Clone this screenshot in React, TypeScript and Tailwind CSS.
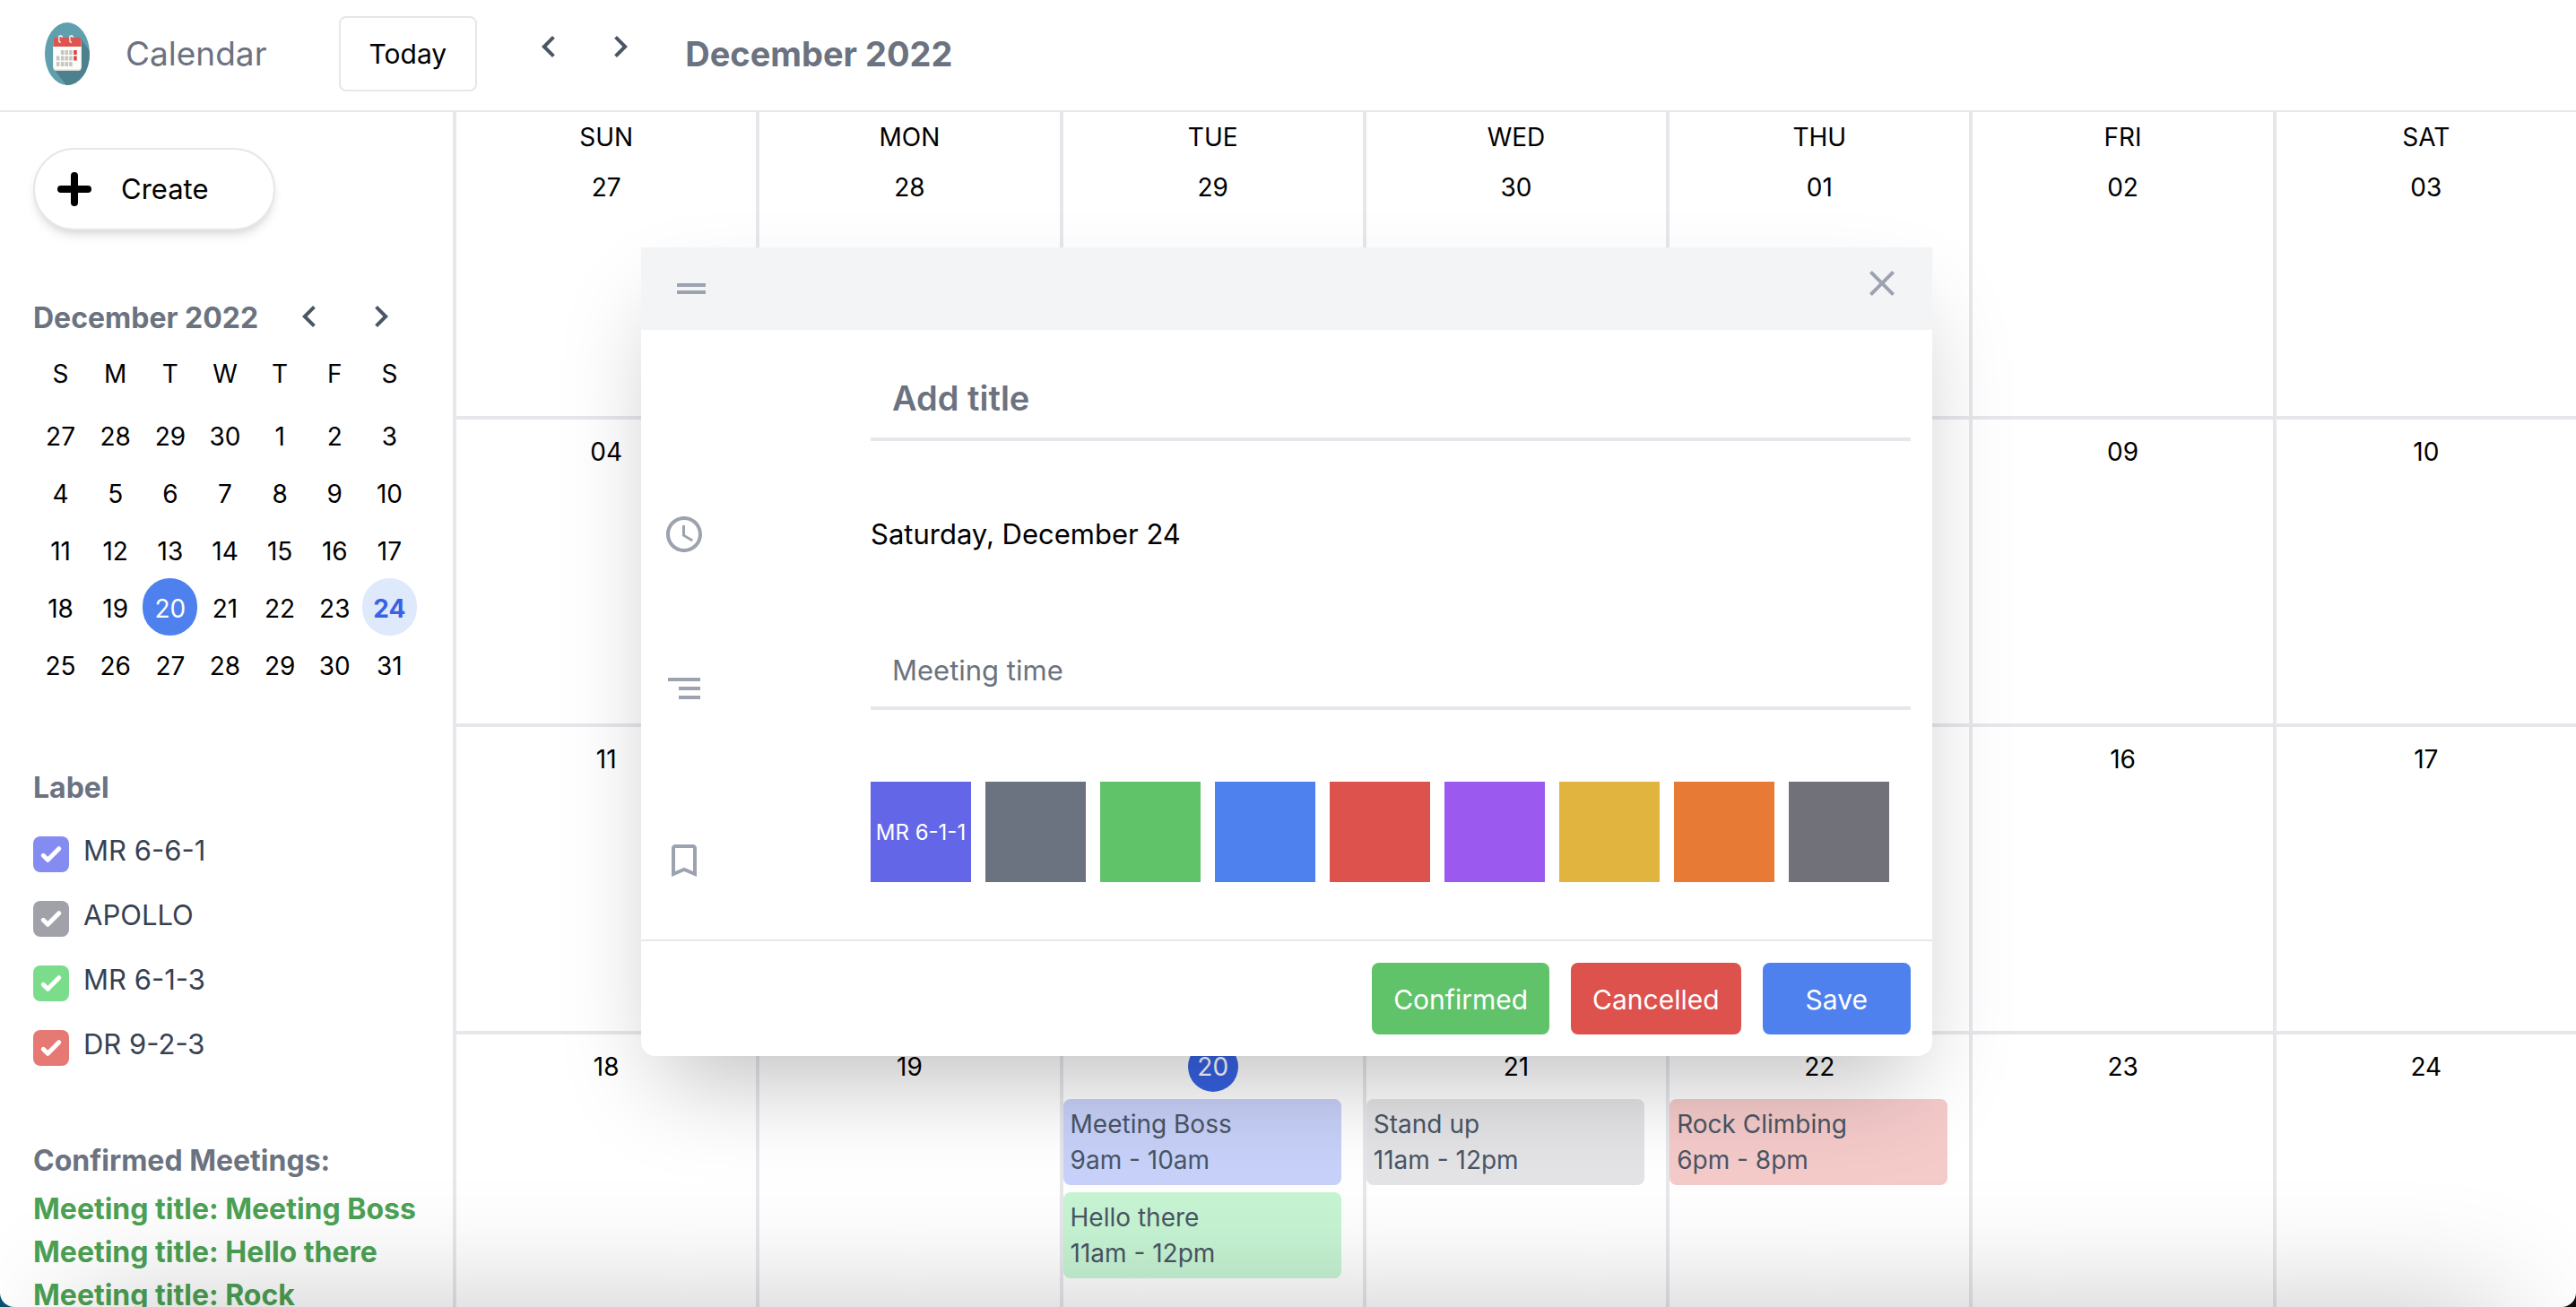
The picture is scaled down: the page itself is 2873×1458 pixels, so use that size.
import React from "react";
import {
  MdBookmarkBorder,
  MdChevronLeft,
  MdChevronRight,
  MdClose,
  MdDragHandle,
  MdSchedule,
  MdSegment,
} from "react-icons/md";

type CalendarEvent = { title: string; time: string; color: string };

const weekdays = ["SUN", "MON", "TUE", "WED", "THU", "FRI", "SAT"];

const monthDays = [
  "27", "28", "29", "30", "01", "02", "03",
  "04", "05", "06", "07", "08", "09", "10",
  "11", "12", "13", "14", "15", "16", "17",
  "18", "19", "20", "21", "22", "23", "24",
];

const events: Record<string, CalendarEvent[]> = {
  "20": [
    { title: "Meeting Boss", time: "9am - 10am", color: "bg-[#c8d1f9]" },
    { title: "Hello there", time: "11am - 12pm", color: "bg-[#c7f5d4]" },
  ],
  "21": [{ title: "Stand up", time: "11am - 12pm", color: "bg-[#e4e4e7]" }],
  "22": [{ title: "Rock Climbing", time: "6pm - 8pm", color: "bg-[#f5cbca]" }],
};

const miniDays = [
  27, 28, 29, 30, 1, 2, 3,
  4, 5, 6, 7, 8, 9, 10,
  11, 12, 13, 14, 15, 16, 17,
  18, 19, 20, 21, 22, 23, 24,
  25, 26, 27, 28, 29, 30, 31,
];

const labels = [
  { name: "MR 6-6-1", color: "bg-[#848cf1]" },
  { name: "APOLLO", color: "bg-[#a1a1aa]" },
  { name: "MR 6-1-3", color: "bg-[#7bdd8b]" },
  { name: "DR 9-2-3", color: "bg-[#e67974]" },
];

const swatches = [
  { name: "Indigo", text: "MR 6-1-1", color: "bg-[#6466e8]" },
  { name: "Gray", text: "", color: "bg-[#6b7280]" },
  { name: "Green", text: "", color: "bg-[#60c36a]" },
  { name: "Blue", text: "", color: "bg-[#4e81ee]" },
  { name: "Red", text: "", color: "bg-[#dd524c]" },
  { name: "Purple", text: "", color: "bg-[#9c59ef]" },
  { name: "Yellow", text: "", color: "bg-[#e1b43f]" },
  { name: "Orange", text: "", color: "bg-[#e77b36]" },
  { name: "Zinc", text: "", color: "bg-[#71717a]" },
];

function Logo() {
  return (
    <svg viewBox="0 0 70 70" preserveAspectRatio="none" className="h-[70px] w-[50px]" aria-hidden="true">
      <defs>
        <clipPath id="disc">
          <circle cx="35" cy="35" r="35" />
        </clipPath>
      </defs>
      <g clipPath="url(#disc)">
        <rect width="70" height="70" fill="#5f9fae" />
        <path d="M56 18 L76 38 V76 H40 L15 53 Z" fill="#4c818d" />
        <rect x="13" y="20" width="44" height="34" rx="4" fill="#d9d6d2" />
        <rect x="13" y="18" width="44" height="34.500" rx="4" fill="#fdfdfb" />
        <path d="M13 27 V21 a4 4 0 0 1 4 -4 H53 a4 4 0 0 1 4 4 V27 Z" fill="#dd5450" />
        <g fill="none" stroke="#e9e6e4" strokeWidth="2" strokeLinecap="round">
          <path d="M27 16 a3 2 0 0 0 -5 0 v4 a2 2 0 0 0 2 2" />
          <path d="M44 16 a3 2 0 0 0 -5 0 v4 a2 2 0 0 0 2 2" />
        </g>
        <g fill="#c9c6c1">
          <rect x="25" y="31" width="5" height="5" />
          <rect x="31.500" y="31" width="5" height="5" />
          <rect x="38" y="31" width="5" height="5" />
          <rect x="18" y="37.500" width="5" height="5" />
          <rect x="25" y="37.500" width="5" height="5" />
          <rect x="31.500" y="37.500" width="5" height="5" />
          <rect x="38" y="37.500" width="5" height="5" />
          <rect x="18" y="44" width="5" height="5" />
          <rect x="25" y="44" width="5" height="5" />
          <rect x="31.500" y="44" width="5" height="5" />
          <rect x="38" y="44" width="5" height="5" />
        </g>
        <g fill="#dd4444">
          <rect x="45" y="31" width="5" height="5" />
          <rect x="45" y="37.500" width="5" height="5" />
        </g>
      </g>
    </svg>
  );
}

function PlusIcon() {
  return (
    <svg viewBox="0 0 56 56" className="h-14 w-14" aria-hidden="true">
      <path d="M28 13 V43 M13 28 H43" stroke="#000" strokeWidth="8" strokeLinecap="round" fill="none" />
    </svg>
  );
}

function MonthArrows() {
  return (
    <div className="flex">
      <button type="button" aria-label="Previous month" className="px-4 text-gray-600">
        <MdChevronLeft size={48} />
      </button>
      <button type="button" aria-label="Next month" className="px-4 text-gray-600">
        <MdChevronRight size={48} />
      </button>
    </div>
  );
}

function Header() {
  return (
    <header className="flex h-[125px] shrink-0 items-center border-b-2 border-[#e5e7eb] bg-white pr-8 pb-1 pl-[50px]">
      <Logo />
      <h1 className="ml-10 text-[37px] leading-[56px] text-[#6b7280]">Calendar</h1>
      <button
        type="button"
        className="mr-10 ml-20 h-[84px] rounded-lg border-2 border-[#e5e7eb] px-8 text-[30px] leading-[48px] text-black"
      >
        Today
      </button>
      <div className="mb-4">
        <MonthArrows />
      </div>
      <h2 className="ml-8 text-[38px] leading-[56px] font-bold text-[#6b7280]">December 2022</h2>
    </header>
  );
}

function MiniCalendar() {
  return (
    <section className="mt-[72px]">
      <div className="flex h-12 items-center justify-between">
        <h2 className="h-12 pt-0.5 text-[32px] leading-[48px] font-bold text-[#6b7280]">December 2022</h2>
        <MonthArrows />
      </div>
      <div className="grid grid-cols-7">
        {["S", "M", "T", "W", "T", "F", "S"].map((d, i) => (
          <span key={i} className="pt-5 pb-4 text-center text-[28px] leading-10">
            {d}
          </span>
        ))}
        {miniDays.map((d, i) => {
          const tone =
            i === 23
              ? "bg-[#4e81ee] text-white"
              : i === 27
                ? "bg-[#dee9fc] font-bold text-[#3762e3]"
                : "text-black";
          return (
            <button
              key={i}
              type="button"
              className={`flex h-16 items-center justify-center rounded-full pt-1 text-[28px] leading-10 ${tone}`}
            >
              {d}
            </button>
          );
        })}
      </div>
    </section>
  );
}

function Labels() {
  return (
    <section className="mt-20">
      <h2 className="h-12 pt-0.5 text-[32px] leading-[48px] font-bold text-[#6b7280]">Label</h2>
      {labels.map((l) => (
        <label key={l.name} className="mt-6 flex h-12 items-end">
          <span className="relative h-10 w-10">
            <input
              type="checkbox"
              defaultChecked
              className={`block h-10 w-10 appearance-none rounded-lg ${l.color}`}
            />
            <svg viewBox="0 0 16 16" className="pointer-events-none absolute inset-0" fill="#fff" aria-hidden="true">
              <path d="M12.207 4.793a1 1 0 010 1.414l-5 5a1 1 0 01-1.414 0l-2-2a1 1 0 011.414-1.414L6.500 9.086l4.293-4.293a1 1 0 011.414 0z" />
            </svg>
          </span>
          <span className="ml-4 text-[31px] leading-[48px] text-[#374151]">{l.name}</span>
        </label>
      ))}
    </section>
  );
}

function Sidebar() {
  return (
    <aside className="w-[505px] shrink-0 pt-10 pr-10 pl-[37px]">
      <button
        type="button"
        className="flex items-center rounded-full border-2 border-[#e5e7eb] bg-white p-4 shadow-[0_8px_12px_-2px_rgba(0,0,0,0.1),0_4px_8px_-4px_rgba(0,0,0,0.1)]"
      >
        <PlusIcon />
        <span className="pr-14 pl-6 text-[31px] leading-[48px]">Create</span>
      </button>
      <MiniCalendar />
      <Labels />
      <section className="mt-20">
        <h2 className="h-12 pt-0.5 text-[32px] leading-[48px] font-bold text-[#6b7280]">Confirmed Meetings:</h2>
        <ul className="mt-2 text-[32px] leading-[48px] font-bold text-[#4ca154]">
          <li>Meeting title: Meeting Boss</li>
          <li>Meeting title: Hello there</li>
          <li>Meeting title: Rock Climbing</li>
        </ul>
      </section>
    </aside>
  );
}

function MonthGrid() {
  return (
    <main className="grid flex-1 auto-rows-[343px] grid-cols-7">
      {monthDays.map((day, i) => (
        <div key={i} className="flex min-w-0 flex-col border-b-4 border-l-4 border-[#e5e7eb]">
          <div className="flex flex-col items-center text-[28px] leading-10">
            {i < 7 && <p className="mt-2">{weekdays[i]}</p>}
            <p
              className={`my-2 py-2 text-center ${day === "20" ? "w-14 rounded-full bg-[#3762e3] text-white" : ""}`}
            >
              {day}
            </p>
          </div>
          {(events[day] ?? []).map((e) => (
            <div
              key={e.title}
              className={`mr-6 mb-2 rounded-lg p-2 text-[28px] leading-10 text-gray-600 ${e.color}`}
            >
              <p className="truncate">{e.title}</p>
              <p className="truncate">{e.time}</p>
            </div>
          ))}
        </div>
      ))}
    </main>
  );
}

function EventModal() {
  return (
    <div className="absolute inset-0 flex items-center justify-center pr-[3px] pb-1">
      <form
        role="dialog"
        aria-label="New event"
        onSubmit={(e) => e.preventDefault()}
        className="w-[1440px] max-w-full rounded-b-2xl bg-white shadow-[0_50px_100px_-24px_rgba(0,0,0,0.25)]"
      >
        <header className="flex h-[92px] items-center justify-between bg-[#f3f4f6] px-8 text-[#9ca3af]">
          <MdDragHandle size={48} />
          <button type="button" aria-label="Close" className="mb-3">
            <MdClose size={48} />
          </button>
        </header>
        <div className="grid grid-cols-[1fr_5fr] items-end gap-y-20 px-6 pt-6 pb-16 text-[#9ca3af]">
          <span />
          <input
            type="text"
            aria-label="Title"
            placeholder="Add title"
            className="w-full border-b-4 border-[#e5e7eb] px-6 pt-6 pb-4 text-[38px] leading-[56px] font-semibold text-gray-600 outline-none placeholder:text-[#6b7280]"
          />
          <MdSchedule size={48} />
          <p className="text-[31px] leading-[48px] text-black">Saturday, December 24</p>
          <MdSegment size={48} />
          <input
            type="text"
            aria-label="Meeting time"
            placeholder="Meeting time"
            className="w-full border-b-4 border-[#e5e7eb] px-6 pt-6 pb-4 text-[31px] leading-[48px] text-gray-600 outline-none placeholder:text-[#6b7280]"
          />
          <MdBookmarkBorder size={48} />
          <div className="flex gap-4">
            {swatches.map((s) => (
              <button
                key={s.name}
                type="button"
                aria-label={s.text || s.name}
                className={`flex h-28 w-28 items-center justify-center pt-0.5 text-2xl whitespace-nowrap text-white ${s.color}`}
              >
                {s.text}
              </button>
            ))}
          </div>
        </div>
        <footer className="flex justify-end gap-6 border-t-2 border-[#e5e7eb] p-6 text-[30px] leading-[48px] text-white">
          <button type="button" className="h-20 rounded-lg bg-[#60c36a] px-6 pt-0.5">
            Confirmed
          </button>
          <button type="button" className="h-20 rounded-lg bg-[#dd524c] px-6 pt-0.5">
            Cancelled
          </button>
          <button type="submit" className="h-20 rounded-lg bg-[#4e81ee] px-12 pt-0.5">
            Save
          </button>
        </footer>
      </form>
    </div>
  );
}

export default function App() {
  return (
    <div className="h-screen overflow-hidden bg-linear-to-r from-[#0b4f70] to-[#0c0f0a] font-['Inter',sans-serif] text-black">
      <div className="relative flex h-full flex-col overflow-hidden rounded-b-2xl bg-white">
        <Header />
        <div className="flex min-h-0 flex-1">
          <Sidebar />
          <MonthGrid />
        </div>
        <EventModal />
        <div className="pointer-events-none absolute inset-x-20 top-full h-40 shadow-[0_0_140px_rgba(0,0,0,0.23)]" />
      </div>
    </div>
  );
}
